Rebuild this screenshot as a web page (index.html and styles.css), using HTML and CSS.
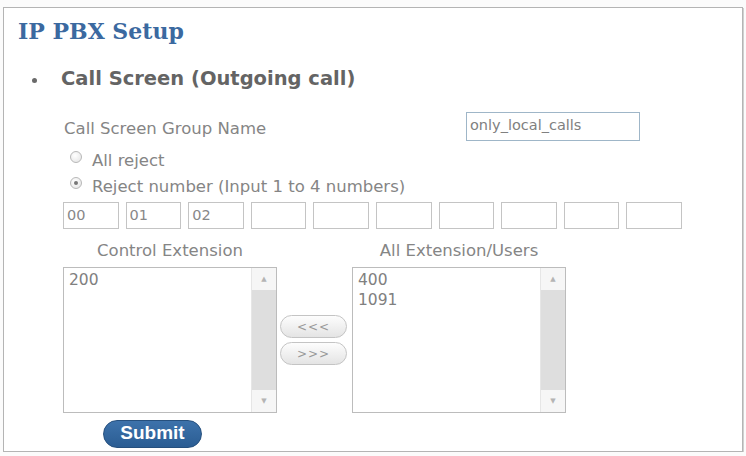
FILE: index.html
```html
<!DOCTYPE html>
<html lang="en">
<head>
<meta charset="UTF-8">
<meta name="viewport" content="width=device-width, initial-scale=1.0">
<title>IP PBX Setup</title>
<link rel="stylesheet" href="styles.css">
</head>
<body>

<div class="panel">
  <h1>IP PBX Setup</h1>

  <ul class="section">
    <li>Call Screen (Outgoing call)</li>
  </ul>

  <div class="screen-form">
    <div class="name-row">
      <label for="groupName">Call Screen Group Name</label>
      <input type="text" id="groupName" class="group-name" value="only_local_calls">
    </div>

    <label class="radio"><span class="dot"></span>All reject</label>
    <label class="radio"><span class="dot on"></span>Reject number (Input 1 to 4 numbers)</label>

    <div class="numbers">
      <input type="text" value="00">
      <input type="text" value="01">
      <input type="text" value="02">
      <input type="text">
      <input type="text">
      <input type="text">
      <input type="text">
      <input type="text">
      <input type="text">
      <input type="text">
    </div>

    <div class="lists">
      <div class="list-col">
        <div class="list-title">Control Extension</div>
        <div class="listbox">
          <div class="items">
            <div>200</div>
          </div>
          <div class="scroll">
            <span class="arrow up">&#9650;</span>
            <span class="arrow down">&#9660;</span>
          </div>
        </div>
      </div>

      <div class="movers">
        <button type="button" class="move">&lt;&lt;&lt;</button>
        <button type="button" class="move">&gt;&gt;&gt;</button>
      </div>

      <div class="list-col">
        <div class="list-title">All Extension/Users</div>
        <div class="listbox">
          <div class="items">
            <div>400</div>
            <div>1091</div>
          </div>
          <div class="scroll">
            <span class="arrow up">&#9650;</span>
            <span class="arrow down">&#9660;</span>
          </div>
        </div>
      </div>
    </div>

    <button type="button" class="submit">Submit</button>
  </div>
</div>

</body>
</html>
```

FILE: styles.css
```css
body {
    margin: 0;
    background: #fbfbfb;
    font-family: "DejaVu Sans", Verdana, sans-serif;
}

.panel {
    margin: 7px 0 0 3px;
    width: 740px;
    height: 445px;
    box-sizing: border-box;
    background: #ffffff;
    border: 1px solid #b4b4b4;
    box-shadow: 1px 1px 0 #d0d0d0;
    padding: 0 0 0 14px;
}

h1 {
    font-family: "DejaVu Serif", Georgia, serif;
    font-size: 22px;
    font-weight: bold;
    color: #3b69a0;
    margin: 0;
    padding-top: 7px;
    line-height: 32px;
}

.section {
    margin: 18px 0 0 0;
    padding: 0 0 0 43px;
    list-style: none;
}

.section li {
    position: relative;
    font-size: 19.5px;
    font-weight: bold;
    color: #646464;
    line-height: 28px;
}

.section li::before {
    content: "";
    position: absolute;
    left: -29px;
    top: 13px;
    width: 5px;
    height: 5px;
    border-radius: 50%;
    background: #6a6a6a;
}

/* form body: labels, radios, number boxes, lists */
.screen-form {
    padding-left: 45px;
    color: #858585;
    font-size: 16.5px;
}

.name-row {
    display: flex;
    justify-content: space-between;
    align-items: center;
    width: 577px;
    margin-top: 19px;
}

.name-row label {
    padding-left: 1px;
    margin-top: 4px;
}

.group-name {
    width: 174px;
    height: 29px;
    box-sizing: border-box;
    border: 1px solid #9fb6c8;
    padding: 0 3px 4px;
    font-family: inherit;
    font-size: 14.5px;
    color: #808080;
}

.radio {
    display: flex;
    align-items: center;
    height: 26px;
    padding-left: 7px;
}

.name-row + .radio {
    margin-top: 6px;
}

.dot {
    width: 10px;
    height: 10px;
    border-radius: 50%;
    border: 1px solid #b8b8b8;
    background: radial-gradient(circle at 40% 35%, #ffffff, #e2e2e2);
    margin: -6px 10px 0 0;
    display: flex;
    align-items: center;
    justify-content: center;
}

.dot.on::after {
    content: "";
    width: 4px;
    height: 4px;
    border-radius: 50%;
    background: #777;
}

.numbers {
    display: flex;
    gap: 7px;
    margin-top: 3px;
}

.numbers input {
    width: 55.6px;
    height: 27px;
    box-sizing: border-box;
    border: 1px solid #c4c4c4;
    padding: 0 3px 2px;
    font-family: inherit;
    font-size: 14.5px;
    color: #888;
}

.lists {
    display: flex;
    align-items: flex-end;
    margin-top: 12px;
}

.list-title {
    text-align: center;
    line-height: 20px;
    margin-bottom: 6px;
}

.listbox {
    width: 214px;
    height: 146px;
    box-sizing: border-box;
    border: 1px solid #bcbcbc;
    display: flex;
}

.items {
    flex: 1;
    padding: 2px 5px;
    font-size: 15.5px;
    line-height: 20px;
    color: #808080;
}

.scroll {
    width: 24px;
    background: #dedede;
    border-left: 1px solid #e6e6e6;
    display: flex;
    flex-direction: column;
    justify-content: space-between;
}

.arrow {
    display: block;
    height: 22px;
    background: #f6f6f6;
    color: #b4b4b4;
    font-size: 7px;
    text-align: center;
    line-height: 22px;
}

.movers {
    display: flex;
    flex-direction: column;
    gap: 4px;
    margin: 0 5px 48px 3px;
}

.move {
    width: 67px;
    height: 23px;
    border: 1px solid #c4c4c4;
    border-radius: 12px;
    background: linear-gradient(#fdfdfd, #e4e4e4);
    color: #999;
    font-family: inherit;
    font-size: 12px;
    letter-spacing: 1px;
    padding: 0;
}

.submit {
    display: block;
    margin: 7px 0 0 40px;
    width: 99px;
    height: 28px;
    border: 1px solid #26507e;
    border-radius: 14px;
    background: linear-gradient(#3d72ab, #2b5d93);
    color: #ffffff;
    font-family: "Liberation Sans", Arial, sans-serif;
    font-size: 19px;
    font-weight: bold;
    padding: 0 0 2px;
}
```
